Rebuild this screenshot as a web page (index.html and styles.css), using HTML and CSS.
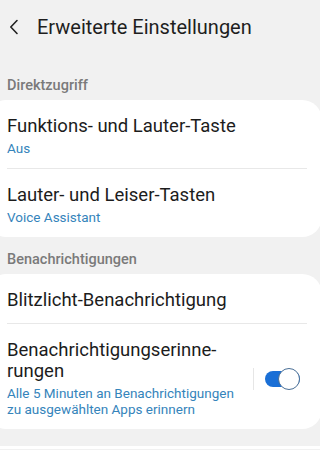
FILE: index.html
```html
<!DOCTYPE html>
<html lang="de">

<head>
    <meta charset="UTF-8">
    <meta name="viewport" content="width=device-width, initial-scale=1.0">
    <title>Erweiterte Einstellungen</title>
    <link rel="stylesheet" href="styles.css">
</head>

<body>
    <div class="topbar">
        <a href="#" class="back">
            <svg width="10" height="16" viewBox="0 0 10 16">
                <path d="M8 1.5 L1.8 8 L8 14.5" fill="none" stroke="#222" stroke-width="1.6" stroke-linecap="round" stroke-linejoin="round"/>
            </svg>
        </a>
        <h1>Erweiterte Einstellungen</h1>
    </div>

    <div class="section-label">Direktzugriff</div>
    <div class="card">
        <div class="row">
            <div class="text">
                <div class="title">Funktions- und Lauter-Taste</div>
                <div class="summary">Aus</div>
            </div>
        </div>
        <div class="row">
            <div class="text">
                <div class="title">Lauter- und Leiser-Tasten</div>
                <div class="summary">Voice Assistant</div>
            </div>
        </div>
    </div>

    <div class="section-label">Benachrichtigungen</div>
    <div class="card">
        <div class="row">
            <div class="text">
                <div class="title">Blitzlicht-Benachrichtigung</div>
            </div>
        </div>
        <div class="row">
            <div class="text narrow">
                <div class="title">Benachrichtigungserinne-<br>rungen</div>
                <div class="summary">Alle 5 Minuten an Benachrichtigungen zu ausgewählten Apps erinnern</div>
            </div>
            <div class="switch-wrap">
                <div class="switch on"><span class="knob"></span></div>
            </div>
        </div>
    </div>

    <!-- next card, only its top edge is on screen -->
    <div class="card next"></div>
</body>

</html>
```

FILE: styles.css
```css
* {
    margin: 0;
    padding: 0;
    box-sizing: border-box;
}

body {
    background: #f1f1f1;
    font-family: Roboto, "Noto Sans", sans-serif;
    color: #1c1c1c;
    width: 320px;
    height: 450px;
    overflow: hidden;
}

.topbar {
    display: flex;
    align-items: flex-start;
    height: 62px;
    padding-top: 15px;
}

.back {
    display: flex;
    width: 37px;
    height: 24px;
    padding: 4px 0 0 9px;
}

.topbar h1 {
    font-size: 20px;
    font-weight: 400;
    line-height: 24px;
    color: #1e1e1e;
}

.section-label {
    font-size: 14.5px;
    font-weight: 500;
    line-height: 18px;
    color: #7a7a7a;
    padding: 0 7px;
    margin: 15px 0 5px;
}

.card + .section-label {
    margin-top: 14px;
}

.card {
    background: #fff;
    border-radius: 20px;
    margin: 0 -2px 0 -14px;
    padding: 0 15px 0 21px;
}

.card.next {
    margin-top: 17px;
    height: 3px;
    border-radius: 20px 20px 0 0;
}

.row {
    display: flex;
    align-items: center;
    padding: 16px 0 12px;
    border-bottom: 1px solid #e8e8e8;
}

.row:last-child {
    border-bottom: none;
}

.text {
    flex: 1;
}

.text.narrow {
    flex: none;
    width: 240px;
}

.title {
    font-size: 18.5px;
    line-height: 21px;
    color: #1c1c1c;
}

.summary {
    font-size: 13.5px;
    line-height: 16px;
    color: #3584bb;
    margin-top: 3px;
}

.switch-wrap {
    display: flex;
    align-items: center;
    border-left: 1px solid #e6e6e6;
    height: 22px;
    padding-left: 11px;
    margin-left: 6px;
}

.switch {
    position: relative;
    width: 35px;
    height: 16px;
    border-radius: 8px;
    background: #1a6fd6;
}

.switch .knob {
    position: absolute;
    right: 0;
    top: -3px;
    width: 22px;
    height: 22px;
    border-radius: 50%;
    background: #fff;
    border: 1.5px solid #4a6f96;
}
```
